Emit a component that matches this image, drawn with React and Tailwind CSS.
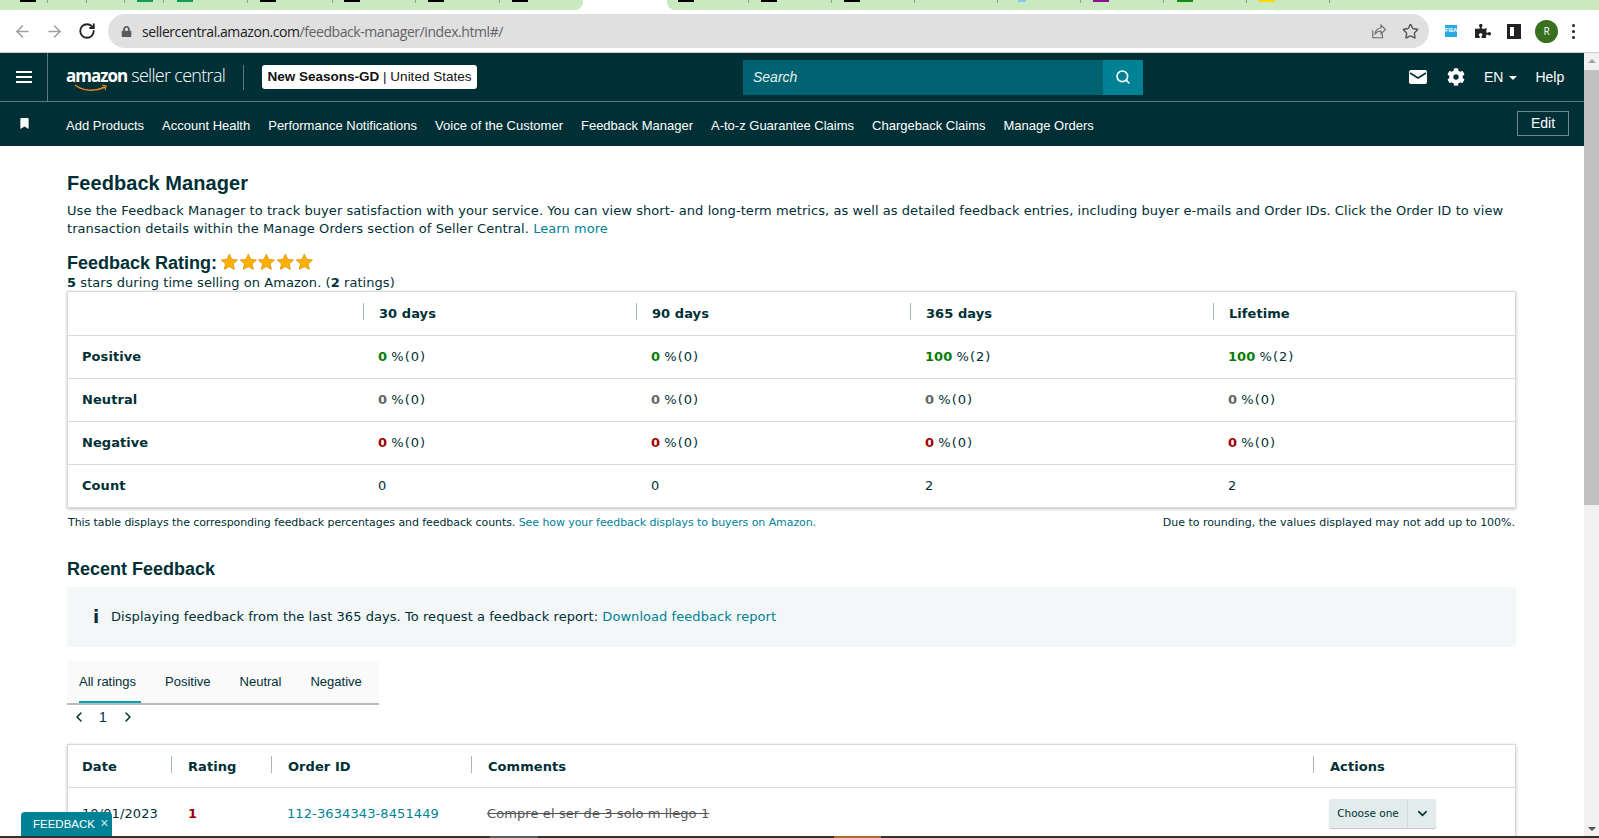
import React from 'react';
import { ArrowLeft, ArrowRight, RotateCw, Star, Search, ChevronLeft, ChevronRight, ChevronDown } from 'lucide-react';
import { FaLock, FaPuzzlePiece, FaCog, FaBookmark } from 'react-icons/fa';

const BROWSER_TABS = [
  { w: 'w-[48px]', icon: 'bg-black', iconX: 'ml-[20px]' },
  { w: 'w-[39px]' },
  { w: 'w-[38px]' },
  { w: 'w-[39px]', icon: 'bg-[#0f9d58]', iconX: 'ml-[12px]' },
  { w: 'w-[84px]', icon: 'bg-[#0f9d58]', iconX: 'ml-[13px]' },
  { w: 'w-[85px]', icon: 'bg-black', iconX: 'ml-[12px]' },
  { w: 'w-[83px]', icon: 'bg-black', iconX: 'ml-[11px]' },
  { w: 'w-[84px]', icon: 'bg-black', iconX: 'ml-[12px]' },
  { w: 'w-[83px] rounded-br-lg', icon: 'bg-black', iconX: 'ml-[12px]', last: true },
];

const BROWSER_TABS_RIGHT = [
  { w: 'w-[82px] rounded-bl-lg', icon: 'bg-black', iconX: 'ml-[11px]' },
  { w: 'w-[83px]', icon: 'bg-black', iconX: 'ml-[12px]' },
  { w: 'w-[83px]', icon: 'bg-black', iconX: 'ml-[12px]' },
  { w: 'w-[83px]' },
  { w: 'w-[83px]', icon: 'bg-[#7fd0ee]', iconX: 'ml-[20px] !w-[8px]' },
  { w: 'w-[83px]', icon: 'bg-[#8b0f8f]', iconX: 'ml-[12px]' },
  { w: 'w-[83px]', icon: 'bg-[#158a15]', iconX: 'ml-[13px]' },
  { w: 'w-[83px]', icon: 'bg-[#ffd800]', iconX: 'ml-[12px]' },
];

const NAV_LINKS = [
  'Add Products', 'Account Health', 'Performance Notifications', 'Voice of the Customer',
  'Feedback Manager', 'A-to-z Guarantee Claims', 'Chargeback Claims', 'Manage Orders',
];

const RATING_COLS = 'grid grid-cols-[295px_273px_274px_303px_1fr]';

const RATING_ROWS = [
  { label: 'Positive', color: 'text-[#067d00]', cells: [['0', '0'], ['0', '0'], ['100', '2'], ['100', '2']] },
  { label: 'Neutral', color: 'text-[#666666]', cells: [['0', '0'], ['0', '0'], ['0', '0'], ['0', '0']] },
  { label: 'Negative', color: 'text-[#a00000]', cells: [['0', '0'], ['0', '0'], ['0', '0'], ['0', '0']] },
];

const FEEDBACK_COLS = 'grid grid-cols-[103px_100px_200px_842px_1fr]';

function BrowserTab({ tab }) {
  return (
    <div className={`h-[10px] bg-[#cbe9c0] flex justify-between items-start shrink-0 ${tab.w}`}>
      {tab.icon ? <span className={`h-[2px] w-[16px] ${tab.icon} ${tab.iconX}`} /> : <span />}
      {!tab.last && <span className="h-[3px] w-px bg-[#8a9a86]" />}
    </div>
  );
}

function HeadSep() {
  return <span className="absolute left-0 top-[11px] h-[17px] w-px bg-[#aab7b8]" />;
}

function GoldStar() {
  return (
    <svg className="w-[18.7px] h-[18px]" viewBox="0 0 24 24">
      <path
        d="M12 1.5l3.2 7 7.6.8-5.7 5.1 1.6 7.5L12 18.1l-6.7 3.8 1.6-7.5L1.2 9.3l7.6-.8z"
        fill="#ffb100"
        stroke="#d98a00"
        strokeWidth="1"
      />
    </svg>
  );
}

function BrowserChrome() {
  return (
    <>
      <div className="h-[10px] flex bg-white shrink-0">
        {BROWSER_TABS.map((t, i) => <BrowserTab key={i} tab={t} />)}
        <div className="w-[84px] shrink-0" />
        {BROWSER_TABS_RIGHT.map((t, i) => <BrowserTab key={i} tab={t} />)}
        <div className="flex-1 bg-[#cbe9c0]" />
      </div>
      <div className="h-[43px] bg-white flex items-center shrink-0 border-b border-[#cccccc]">
        <div className="flex items-center w-[108px] pl-[13px] gap-[13px]">
          <ArrowLeft size={19} className="text-[#a0a0a0]" strokeWidth={2} />
          <ArrowRight size={19} className="text-[#a0a0a0]" strokeWidth={2} />
          <RotateCw size={18} className="text-[#222222] ml-px" strokeWidth={2.4} />
        </div>
        <div className="h-[34px] w-[1321px] rounded-full bg-[#e0e0e0] flex items-center pl-[13px] pr-[10px]">
          <FaLock size={11} className="text-[#5a5a5a]" />
          <span className="ml-[10px] text-[14px] text-[#5f6368] font-['Open_Sans',sans-serif] tracking-[-0.43px]">
            <span className="text-[#202124]">sellercentral.amazon.com</span>/feedback-manager/index.html#/
          </span>
          <svg className="ml-auto" width="18" height="18" viewBox="0 0 24 24" fill="none" stroke="#6b6b6b" strokeWidth="1.5">
            <path d="M5 11v10h13v-5" />
            <path d="M8 16c0-5 4-8 8-8V4l6 6-6 6v-4c-3 0-6 1-8 4z" />
          </svg>
          <Star size={17} className="text-[#555555] ml-[15px]" strokeWidth={2} />
        </div>
        <div className="w-[12px] h-[12px] ml-[16px] bg-[#29abe2] text-[6px] leading-[10px] font-bold text-white text-center font-['Liberation_Sans',sans-serif]">FBA</div>
        <FaPuzzlePiece size={16} className="text-[#222222] ml-[18px]" />
        <div className="w-[14px] h-[15px] ml-[16px] border-[3px] border-[#222222] border-r-[7px]" />
        <div className="w-[23px] h-[23px] ml-[14px] rounded-full bg-[#38701f] text-white text-[10px] flex items-center justify-center font-['Open_Sans',sans-serif]">R</div>
        <div className="ml-[14px] flex flex-col gap-[3px]">
          <span className="w-[3px] h-[3px] rounded-full bg-[#222222]" />
          <span className="w-[3px] h-[3px] rounded-full bg-[#222222]" />
          <span className="w-[3px] h-[3px] rounded-full bg-[#222222]" />
        </div>
      </div>
    </>
  );
}

function SellerHeader() {
  return (
    <header className="bg-[#002f36] text-white font-['Liberation_Sans',sans-serif] shrink-0">
      <div className="h-[49px] flex items-center border-b border-[#5d7a7d]">
        <div className="w-[48px] h-full border-r border-[#5d7a7d] flex flex-col items-center justify-center gap-[3px]">
          <span className="w-[16px] h-[2px] bg-white" />
          <span className="w-[16px] h-[2px] bg-white" />
          <span className="w-[16px] h-[2px] bg-white" />
        </div>
        <div className="relative ml-[18px] w-[160px] h-[30px] flex items-baseline whitespace-nowrap -mt-[5px]">
          <span className="font-['Open_Sans',sans-serif] font-bold text-[17px] leading-[30px] tracking-[-1px]">amazon</span>
          <span className="ml-[4px] font-['Open_Sans',sans-serif] font-light text-[18px] leading-[30px] tracking-[-0.7px]">seller central</span>
          <svg className="absolute left-[8px] top-[24px]" width="34" height="9" viewBox="0 0 34 9" fill="none">
            <path d="M1 1c8 6 20 7 30 2" stroke="#f08a1d" strokeWidth="1.5" />
            <path d="M28 1l4 1-1 4" stroke="#f08a1d" strokeWidth="1.2" />
          </svg>
        </div>
        <span className="ml-[17px] h-[25px] w-px bg-[#5d7a7d]" />
        <div className="ml-[18px] w-[215px] h-[24px] bg-white rounded-[3px] text-[#111111] text-[13.5px] flex items-center justify-center whitespace-nowrap">
          <span className="font-bold">New Seasons-GD</span>
          <span>&nbsp;|&nbsp;United States</span>
        </div>
        <div className="ml-[266px] w-[400px] h-[35px] flex">
          <div className="flex-1 bg-[#006170] pl-[10px] italic text-[14px] leading-[35px] text-[#e6f0f1]">Search</div>
          <div className="w-[40px] bg-[#008296] flex items-center justify-center">
            <Search size={16} strokeWidth={2.4} />
          </div>
        </div>
        <svg className="ml-[266px]" width="18" height="14" viewBox="0 0 18 14">
          <rect width="18" height="14" rx="2" fill="#ffffff" />
          <path d="M1 3l8 5 8-5" fill="none" stroke="#002f36" strokeWidth="1.5" />
        </svg>
        <FaCog size={18} className="ml-[20px]" />
        <span className="ml-[19px] text-[14px]">EN</span>
        <span className="ml-[6px] mt-px border-x-[4px] border-x-transparent border-t-[4px] border-t-white" />
        <span className="ml-[18px] text-[14px]">Help</span>
      </div>
      <div className="h-[44px] flex items-center pt-[2px]">
        <div className="w-[66px] pl-[19px] -mt-[4px]">
          <FaBookmark size={11} />
        </div>
        <nav className="flex gap-[18px] text-[13px] whitespace-nowrap mt-px">
          {NAV_LINKS.map((n) => <a key={n}>{n}</a>)}
        </nav>
        <button className="ml-auto mr-[15px] w-[52px] h-[25px] -mt-[3px] border border-[#6f8a8c] text-[14px]">Edit</button>
      </div>
    </header>
  );
}

function RatingTable() {
  return (
    <div className="-mt-px border border-[#d5dbdb] shadow-[0_1px_3px_rgba(0,0,0,0.25)] text-[13px]">
      <div className={`${RATING_COLS} h-[43px] items-center font-bold`}>
        <div />
        {['30 days', '90 days', '365 days', 'Lifetime'].map((h) => (
          <div key={h} className="relative h-full pl-[16px] leading-[44px]">
            <HeadSep />
            {h}
          </div>
        ))}
      </div>
      {RATING_ROWS.map((r) => (
        <div key={r.label} className={`${RATING_COLS} h-[43px] items-center border-t border-[#d5dbdb]`}>
          <div className="pl-[14px] font-bold">{r.label}</div>
          {r.cells.map(([pct, n], i) => (
            <div key={i} className="pl-[15px]">
              <span className={`font-bold ${r.color}`}>{pct}</span>{' '}
              <span className="tracking-[1px]">%({n})</span>
            </div>
          ))}
        </div>
      ))}
      <div className={`${RATING_COLS} h-[43px] items-center border-t border-[#d5dbdb]`}>
        <div className="pl-[14px] font-bold">Count</div>
        {['0', '0', '2', '2'].map((c, i) => <div key={i} className="pl-[15px]">{c}</div>)}
      </div>
    </div>
  );
}

function FeedbackTable() {
  return (
    <div className="mt-[15px] border border-[#d5dbdb] shadow-[0_1px_3px_rgba(0,0,0,0.25)] text-[13px]">
      <div className={`${FEEDBACK_COLS} h-[42px] items-center font-bold`}>
        <div className="pl-[14px] leading-[44px]">Date</div>
        {['Rating', 'Order ID', 'Comments', 'Actions'].map((h) => (
          <div key={h} className="relative h-full pl-[17px] leading-[44px]">
            <HeadSep />
            {h}
          </div>
        ))}
      </div>
      <div className={`${FEEDBACK_COLS} h-[52px] items-center border-t border-[#d5dbdb] tracking-[0.1px]`}>
        <div className="pl-[14px]">10/01/2023</div>
        <div className="pl-[17px] font-bold text-[#a00000]">1</div>
        <div className="pl-[16px] text-[#008296]">112-3634343-8451449</div>
        <div className="pl-[16px] text-[#555555] line-through">Compre el ser de 3 solo m llego 1</div>
        <div className="pl-[16px]">
          <div className="w-[107px] h-[29px] flex bg-[#e3ecec] rounded-[2px] shadow-[0_1px_1px_rgba(0,0,0,0.25)] text-[10.5px] tracking-normal">
            <span className="w-[79px] leading-[29px] text-center border-r border-[#d5dbdb]">Choose one</span>
            <span className="flex-1 flex items-center justify-center">
              <ChevronDown size={15} strokeWidth={2.4} />
            </span>
          </div>
        </div>
      </div>
    </div>
  );
}

export default function App() {
  return (
    <div className="relative w-[1599px] h-[838px] overflow-hidden flex flex-col bg-white">
      <BrowserChrome />
      <div className="flex-1 min-h-0 flex">
        <div className="flex-1 min-w-0 overflow-hidden flex flex-col">
          <SellerHeader />
          <main className="pl-[67px] pr-[68px] text-[#002f36] font-['DejaVu_Sans',sans-serif] text-[13px] leading-[18px] tracking-[0.06px]">
            <h1 className="mt-[23px] text-[20px] leading-[28px] font-bold font-['Liberation_Sans',sans-serif]">Feedback Manager</h1>
            <p className="mt-[5px]">
              Use the Feedback Manager to track buyer satisfaction with your service. You can view short- and long-term metrics, as well as detailed feedback entries, including buyer e-mails and Order IDs. Click the Order ID to view transaction details within the Manage Orders section of Seller Central.{' '}
              <a className="text-[#008296]">Learn more</a>
            </p>
            <div className="mt-[14px] flex items-center h-[22px]">
              <h2 className="text-[18px] font-bold font-['Liberation_Sans',sans-serif] tracking-normal mr-[3px]">Feedback Rating:</h2>
              <div className="flex -mt-[3px]">
                {[0, 1, 2, 3, 4].map((i) => <GoldStar key={i} />)}
              </div>
            </div>
            <p><b>5</b> stars during time selling on Amazon. (<b>2</b> ratings)</p>
            <RatingTable />
            <div className="mt-[6px] flex justify-between px-px text-[11px] leading-[18px]">
              <p className="tracking-[-0.08px]">
                This table displays the corresponding feedback percentages and feedback counts.{' '}
                <a className="text-[#008296]">See how your feedback displays to buyers on Amazon.</a>
              </p>
              <p className="tracking-[-0.02px]">Due to rounding, the values displayed may not add up to 100%.</p>
            </div>
            <h2 className="mt-[24px] text-[18px] leading-[26px] font-bold font-['Liberation_Sans',sans-serif] tracking-normal">Recent Feedback</h2>
            <div className="mt-[5px] h-[60px] bg-[#f3f7f7] flex items-center pl-[26px]">
              <span className="text-[18px] font-bold w-[18px]">i</span>
              <span>
                Displaying feedback from the last 365 days. To request a feedback report:{' '}
                <a className="text-[#008296]">Download feedback report</a>
              </span>
            </div>
            <div className="mt-[14px] w-[312px] h-[44px] bg-[#fafafa] border-b-2 border-[#bbbbbb] flex font-['Liberation_Sans',sans-serif] text-[13px] whitespace-nowrap tracking-normal">
              <div className="relative ml-[12px] w-[62px] leading-[41px]">
                <span>All ratings</span>
                <span className="absolute left-0 right-0 bottom-0 h-[2px] bg-[#00a4b4]" />
              </div>
              <span className="ml-[24px] leading-[41px]">Positive</span>
              <span className="ml-[29px] leading-[41px]">Neutral</span>
              <span className="ml-[29px] leading-[41px]">Negative</span>
            </div>
            <div className="h-[24px] flex items-center font-['Liberation_Sans',sans-serif] text-[14px] pl-[4px]">
              <ChevronLeft size={16} strokeWidth={2.2} />
              <span className="ml-[12px]">1</span>
              <ChevronRight size={16} strokeWidth={2.2} className="ml-[13px]" />
            </div>
            <FeedbackTable />
          </main>
        </div>
        {/* scrollbar */}
        <div className="w-[15px] bg-[#f1f1f1] flex flex-col items-center shrink-0">
          <span className="mt-[6px] border-x-[4px] border-x-transparent border-b-[4px] border-b-[#a3a3a3]" />
          <div className="mt-[7px] w-full h-[435px] bg-[#c1c1c1]" />
          <span className="mt-auto mb-[5px] border-x-[4px] border-x-transparent border-t-[4px] border-t-[#505050]" />
        </div>
      </div>
      {/* taskbar sliver */}
      <div className="h-[2px] flex bg-[#33302e] shrink-0">
        <div className="ml-[490px] w-[48px] bg-[#5c5c5c]" />
        <div className="ml-[296px] w-[47px] bg-[#b26a2c]" />
      </div>
      <div className="absolute left-[21px] bottom-[2px] w-[91px] h-[24px] pl-[12px] bg-[#008296] rounded-t-[4px] text-white text-[11.5px] leading-[24px] font-['Liberation_Sans',sans-serif] whitespace-nowrap">
        FEEDBACK <span className="ml-[2px] text-[14px] leading-[14px] text-[#d5e8eb]">×</span>
      </div>
    </div>
  );
}
